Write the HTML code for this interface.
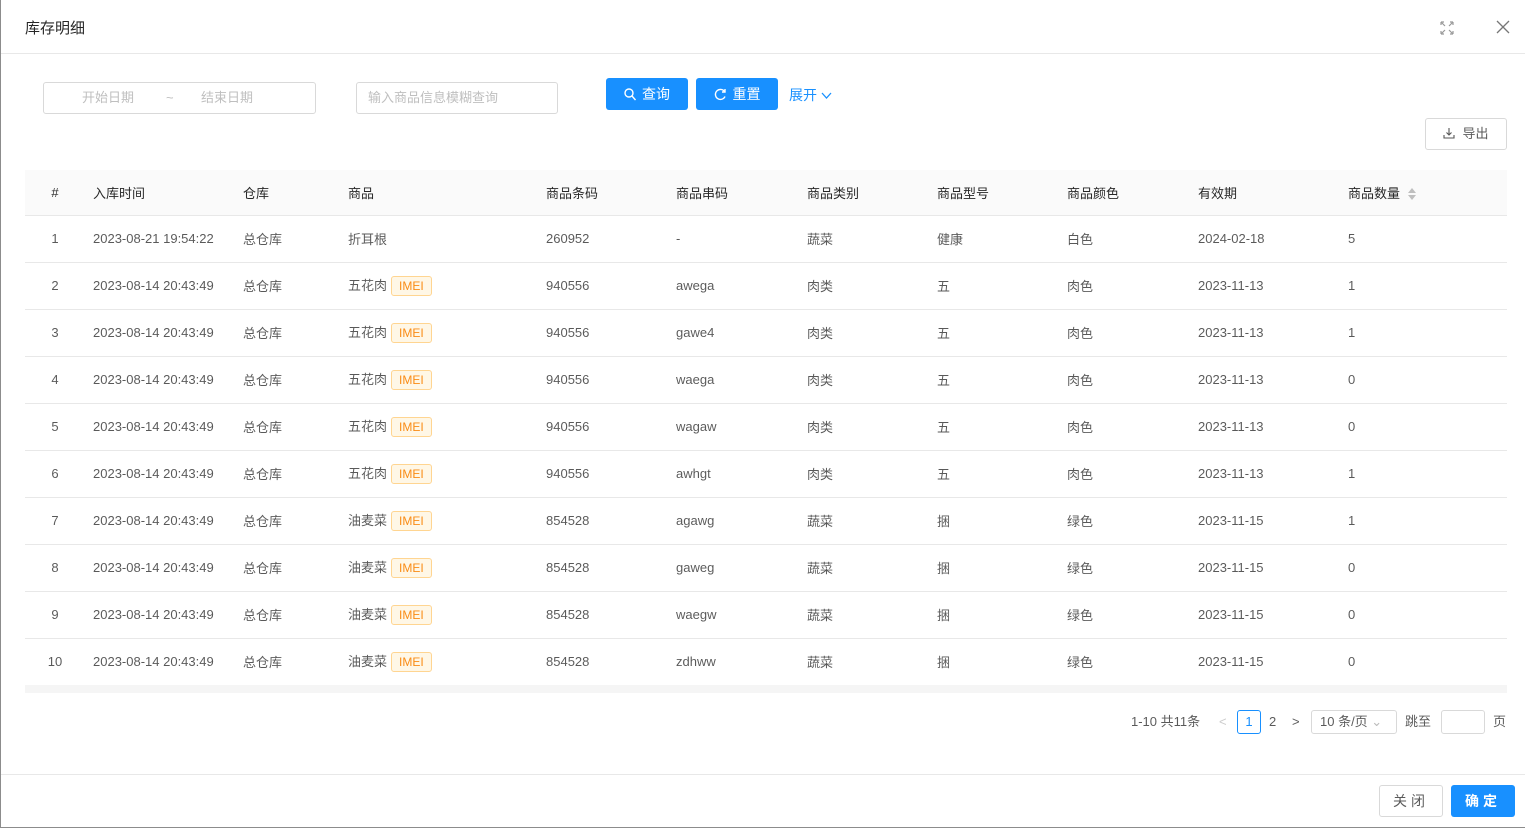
<!DOCTYPE html>
<html><head><meta charset="utf-8"><style>
*{box-sizing:border-box;margin:0;padding:0}
body{width:1525px;height:828px;overflow:hidden;background:#fff;font-family:"Liberation Sans","Noto Sans CJK SC",sans-serif;font-size:13px;color:rgba(0,0,0,.65);position:relative}
.frame{position:absolute;left:0;top:0;width:1525px;height:828px;border-left:1px solid #8c8c8c;border-bottom:1px solid #8c8c8c}
.abs{position:absolute}
.title{left:25px;top:17px;font-size:15px;color:rgba(0,0,0,.85)}
.hline{position:absolute;left:1px;right:0;height:1px;background:#e8e8e8}
.inp{position:absolute;border:1px solid #d9d9d9;border-radius:3px;height:32px;color:#bfbfbf;font-size:13px;line-height:30px}
.btn{position:absolute;height:32px;border-radius:3px;background:#1890ff;color:#fff;font-size:14px;line-height:32px;text-align:center}
table{position:absolute;left:25px;top:170px;width:1482px;border-collapse:collapse}
th{background:#fafafa;font-weight:normal;color:rgba(0,0,0,.85);height:45px;text-align:left;border-bottom:1px solid #e8e8e8}
td{height:47px;border-bottom:1px solid #e8e8e8;text-align:left}
.n{text-align:center;padding-right:8px}
.tag{display:inline-block;border:1px solid #ffd591;background:#fff7e6;color:#fa8c16;font-size:12px;height:20px;line-height:18px;padding:0 7px;border-radius:3px;margin-left:4px;vertical-align:middle}
.pg{position:absolute;top:710px;height:24px;line-height:24px;font-size:13px}
</style></head><body>
<div class="frame"></div>
<div class="abs title">库存明细</div>
<svg class="abs" style="left:1440px;top:21px" width="14" height="14" viewBox="0 0 14 14" fill="none" stroke="#999" stroke-width="1.2"><path d="M1 1l4 4M1 1v3M1 1h3M13 1l-4 4M13 1v3M13 1h-3M1 13l4-4M1 13v-3M1 13h3M13 13l-4-4M13 13v-3M13 13h-3"/></svg>
<svg class="abs" style="left:1496px;top:20px" width="14" height="14" viewBox="0 0 14 14" stroke="#777" stroke-width="1.3"><path d="M1 1l12 12M13 1L1 13"/></svg>
<div class="hline" style="top:53px"></div>

<div class="inp" style="left:43px;top:82px;width:273px"><span class="abs" style="left:38px">开始日期</span><span class="abs" style="left:122px">~</span><span class="abs" style="left:157px">结束日期</span></div>
<div class="inp" style="left:356px;top:82px;width:202px;padding-left:11px">输入商品信息模糊查询</div>
<div class="btn" style="left:606px;top:78px;width:82px"><svg style="vertical-align:-2px;margin-right:6px" width="12" height="13" viewBox="0 0 12 13" fill="none" stroke="#fff" stroke-width="1.4"><circle cx="5" cy="5" r="4"/><path d="M8 8l3.5 4"/></svg>查询</div>
<div class="btn" style="left:696px;top:78px;width:82px"><svg style="vertical-align:-2px;margin-right:7px" width="12" height="13" viewBox="0 0 12 13" fill="none" stroke="#fff" stroke-width="1.4"><path d="M10.5 3.5A5 5 0 1 0 11 8.5"/><path d="M11 1v3h-3"/></svg>重置</div>
<div class="abs" style="left:789px;top:85px;color:#1890ff;font-size:14px">展开 <svg width="11" height="8" viewBox="0 0 11 8" fill="none" stroke="#1890ff" stroke-width="1.3"><path d="M1 1l4.5 5L10 1"/></svg></div>

<div class="abs" style="left:1425px;top:118px;width:82px;height:32px;border:1px solid #d9d9d9;border-radius:3px;line-height:30px;text-align:center;font-size:13px"><svg style="vertical-align:-1px;margin-right:7px" width="12" height="12" viewBox="0 0 12 12" fill="none" stroke="#555" stroke-width="1.1"><path d="M6 1v7M3.5 5.5L6 8l2.5-2.5M1 8v3h10V8"/></svg>导出</div>

<table>
<colgroup><col style="width:68px"><col style="width:150px"><col style="width:105px"><col style="width:198px"><col style="width:130px"><col style="width:131px"><col style="width:130px"><col style="width:130px"><col style="width:131px"><col style="width:150px"><col></colgroup>
<tr><th class="n">#</th><th>入库时间</th><th>仓库</th><th>商品</th><th>商品条码</th><th>商品串码</th><th>商品类别</th><th>商品型号</th><th>商品颜色</th><th>有效期</th><th>商品数量 <svg style="vertical-align:-2px;margin-left:4px" width="8" height="12" viewBox="0 0 8 12" fill="#bfbfbf"><path d="M4 0L8 5H0zM0 7h8L4 12z"/></svg></th></tr>
<tr><td class="n">1</td><td>2023-08-21 19:54:22</td><td>总仓库</td><td>折耳根</td><td>260952</td><td>-</td><td>蔬菜</td><td>健康</td><td>白色</td><td>2024-02-18</td><td>5</td></tr>
<tr><td class="n">2</td><td>2023-08-14 20:43:49</td><td>总仓库</td><td>五花肉<span class="tag">IMEI</span></td><td>940556</td><td>awega</td><td>肉类</td><td>五</td><td>肉色</td><td>2023-11-13</td><td>1</td></tr>
<tr><td class="n">3</td><td>2023-08-14 20:43:49</td><td>总仓库</td><td>五花肉<span class="tag">IMEI</span></td><td>940556</td><td>gawe4</td><td>肉类</td><td>五</td><td>肉色</td><td>2023-11-13</td><td>1</td></tr>
<tr><td class="n">4</td><td>2023-08-14 20:43:49</td><td>总仓库</td><td>五花肉<span class="tag">IMEI</span></td><td>940556</td><td>waega</td><td>肉类</td><td>五</td><td>肉色</td><td>2023-11-13</td><td>0</td></tr>
<tr><td class="n">5</td><td>2023-08-14 20:43:49</td><td>总仓库</td><td>五花肉<span class="tag">IMEI</span></td><td>940556</td><td>wagaw</td><td>肉类</td><td>五</td><td>肉色</td><td>2023-11-13</td><td>0</td></tr>
<tr><td class="n">6</td><td>2023-08-14 20:43:49</td><td>总仓库</td><td>五花肉<span class="tag">IMEI</span></td><td>940556</td><td>awhgt</td><td>肉类</td><td>五</td><td>肉色</td><td>2023-11-13</td><td>1</td></tr>
<tr><td class="n">7</td><td>2023-08-14 20:43:49</td><td>总仓库</td><td>油麦菜<span class="tag">IMEI</span></td><td>854528</td><td>agawg</td><td>蔬菜</td><td>捆</td><td>绿色</td><td>2023-11-15</td><td>1</td></tr>
<tr><td class="n">8</td><td>2023-08-14 20:43:49</td><td>总仓库</td><td>油麦菜<span class="tag">IMEI</span></td><td>854528</td><td>gaweg</td><td>蔬菜</td><td>捆</td><td>绿色</td><td>2023-11-15</td><td>0</td></tr>
<tr><td class="n">9</td><td>2023-08-14 20:43:49</td><td>总仓库</td><td>油麦菜<span class="tag">IMEI</span></td><td>854528</td><td>waegw</td><td>蔬菜</td><td>捆</td><td>绿色</td><td>2023-11-15</td><td>0</td></tr>
<tr><td class="n">10</td><td>2023-08-14 20:43:49</td><td>总仓库</td><td>油麦菜<span class="tag">IMEI</span></td><td>854528</td><td>zdhww</td><td>蔬菜</td><td>捆</td><td>绿色</td><td>2023-11-15</td><td>0</td></tr>
</table>
<div class="abs" style="left:25px;top:685px;width:1482px;height:8px;background:#f5f5f5"></div>

<div class="pg" style="left:1131px">1-10 共11条</div>
<div class="pg" style="left:1219px;color:#ccc">&lt;</div>
<div class="pg" style="left:1237px;width:24px;border:1px solid #1890ff;border-radius:3px;color:#1890ff;text-align:center;line-height:22px">1</div>
<div class="pg" style="left:1269px">2</div>
<div class="pg" style="left:1292px">&gt;</div>
<div class="pg" style="left:1311px;width:86px;border:1px solid #d9d9d9;border-radius:3px;padding-left:8px;line-height:22px">10 条/页 <span style="color:#bbb">⌄</span></div>
<div class="pg" style="left:1405px">跳至</div>
<div class="pg" style="left:1441px;width:44px;border:1px solid #d9d9d9;border-radius:3px"></div>
<div class="pg" style="left:1493px">页</div>

<div class="hline" style="top:774px"></div>
<div class="abs" style="left:1379px;top:785px;width:64px;height:32px;border:1px solid #d9d9d9;border-radius:3px;text-align:center;line-height:30px;font-size:14px;letter-spacing:4px">关闭</div>
<div class="btn" style="left:1451px;top:785px;width:64px;letter-spacing:4px;font-weight:bold">确定</div>
</body></html>
